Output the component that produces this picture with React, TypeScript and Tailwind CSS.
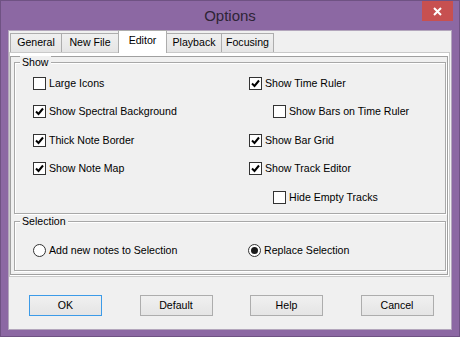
import React from "react";

const font = { fontFamily: '"Liberation Sans", Arial, sans-serif' };

const tabs = [
  { label: "General", w: "w-[52px]" },
  { label: "New File", w: "w-[57px]" },
  { label: "Editor", w: "w-[49px]", active: true },
  { label: "Playback", w: "w-[55px]" },
  { label: "Focusing", w: "w-[52px]" },
];

const Check = ({ checked }: { checked?: boolean }) => (
  <span className="flex h-[13px] w-[13px] shrink-0 items-center justify-center border border-[#333] bg-white">
    {checked && (
      <svg width="9" height="9" viewBox="0 0 9 9">
        <path d="M1 4.5 L3.5 7 L8 1.5" fill="none" stroke="#000" strokeWidth="2" />
      </svg>
    )}
  </span>
);

const Item = ({ label, checked, indent }: { label: string; checked?: boolean; indent?: boolean }) => (
  <div className={`flex h-[28.5px] items-center gap-[3px] ${indent ? "pl-[24px]" : ""}`}>
    <Check checked={checked} />
    <span className="text-[10.6px] leading-none text-black">{label}</span>
  </div>
);

const Radio = ({ label, on }: { label: string; on?: boolean }) => (
  <div className="flex h-[16px] items-center gap-[3px]">
    <span className="flex h-[13px] w-[13px] shrink-0 items-center justify-center rounded-full border border-[#333] bg-white">
      {on && <span className="h-[7px] w-[7px] rounded-full bg-[#1a1a1a]" />}
    </span>
    <span className="text-[10.6px] leading-none text-black">{label}</span>
  </div>
);

const Group = ({ title, className, children }: { title: string; className: string; children: React.ReactNode }) => (
  <div className={`relative ml-[3px] mr-[1px] border border-[#a8a8a8] shadow-[inset_1px_1px_0_#fff,1px_1px_0_#fff] ${className}`}>
    <span className="absolute -top-[7px] left-[5px] bg-[#f0f0f0] px-[2px] text-[10.6px] leading-[12px] text-black">
      {title}
    </span>
    {children}
  </div>
);

const Button = ({ label, primary }: { label: string; primary?: boolean }) => (
  <div
    className={`flex h-[21px] w-[73px] items-center justify-center border bg-gradient-to-b from-[#f0f0f0] to-[#e5e5e5] text-[10.6px] text-black ${
      primary ? "border-[#3c9be8]" : "border-[#adadad]"
    }`}
  >
    {label}
  </div>
);

export default function App() {
  return (
    <div style={font} className="flex h-[337px] w-[460px] flex-col border border-[#6f5283] bg-[#8c68a3] px-[7px] pb-[6px]">
      <div className="relative flex h-[29px] shrink-0 items-center justify-center">
        <span className="pt-[1px] text-[15px] text-[#2e2436]">Options</span>
        <div className="absolute right-[-1px] top-0 flex h-[20px] w-[31px] items-center justify-center bg-[#c75050]">
          <svg width="9" height="9" viewBox="0 0 9 9">
            <path d="M1 1 L8 8 M8 1 L1 8" stroke="#fff" strokeWidth="2" />
          </svg>
        </div>
      </div>

      <div className="flex flex-1 flex-col border border-[#b3a6bc] bg-[#f0f0f0]">
        <div className="flex h-[21px] items-end pl-[1px]">
          {tabs.map((t, i) =>
            t.active ? (
              <div
                key={t.label}
                className={`relative z-10 -mb-[1px] -ml-px flex h-[23px] items-center justify-center border border-b-0 border-[#adadad] bg-white pb-[3px] text-[10.6px] text-black ${t.w}`}
              >
                {t.label}
              </div>
            ) : (
              <div
                key={t.label}
                className={`flex h-[19px] items-center justify-center border-r border-t border-[#adadad] bg-gradient-to-b from-[#f0f0f0] to-[#e5e5e5] text-[10.6px] text-black ${
                  i === 0 ? "border-l" : ""
                } ${t.w}`}
              >
                {t.label}
              </div>
            )
          )}
        </div>

        <div className="mr-[1px] h-[225px] border border-[#c9c9c9] bg-white pb-[1px] pr-[1px] pt-[3px]">
          <div className="flex h-full flex-col border border-[#a0a0a0] bg-[#f0f0f0]">
            <Group title="Show" className="mt-[5px] h-[152px]">
              <div className="flex pl-[18px] pt-[6px]">
                <div className="flex w-[216px] flex-col">
                  <Item label="Large Icons" />
                  <Item label="Show Spectral Background" checked />
                  <Item label="Thick Note Border" checked />
                  <Item label="Show Note Map" checked />
                </div>
                <div className="flex flex-col">
                  <Item label="Show Time Ruler" checked />
                  <Item label="Show Bars on Time Ruler" indent />
                  <Item label="Show Bar Grid" checked />
                  <Item label="Show Track Editor" checked />
                  <Item label="Hide Empty Tracks" indent />
                </div>
              </div>
            </Group>

            <Group title="Selection" className="mt-[7px] h-[50px]">
              <div className="flex pl-[18px] pt-[20px]">
                <div className="w-[215px]">
                  <Radio label="Add new notes to Selection" />
                </div>
                <Radio label="Replace Selection" on />
              </div>
            </Group>
          </div>
        </div>

        <div className="mt-[18px] flex gap-[37.5px] pl-[20px]">
          <Button label="OK" primary />
          <Button label="Default" />
          <Button label="Help" />
          <Button label="Cancel" />
        </div>
      </div>
    </div>
  );
}
